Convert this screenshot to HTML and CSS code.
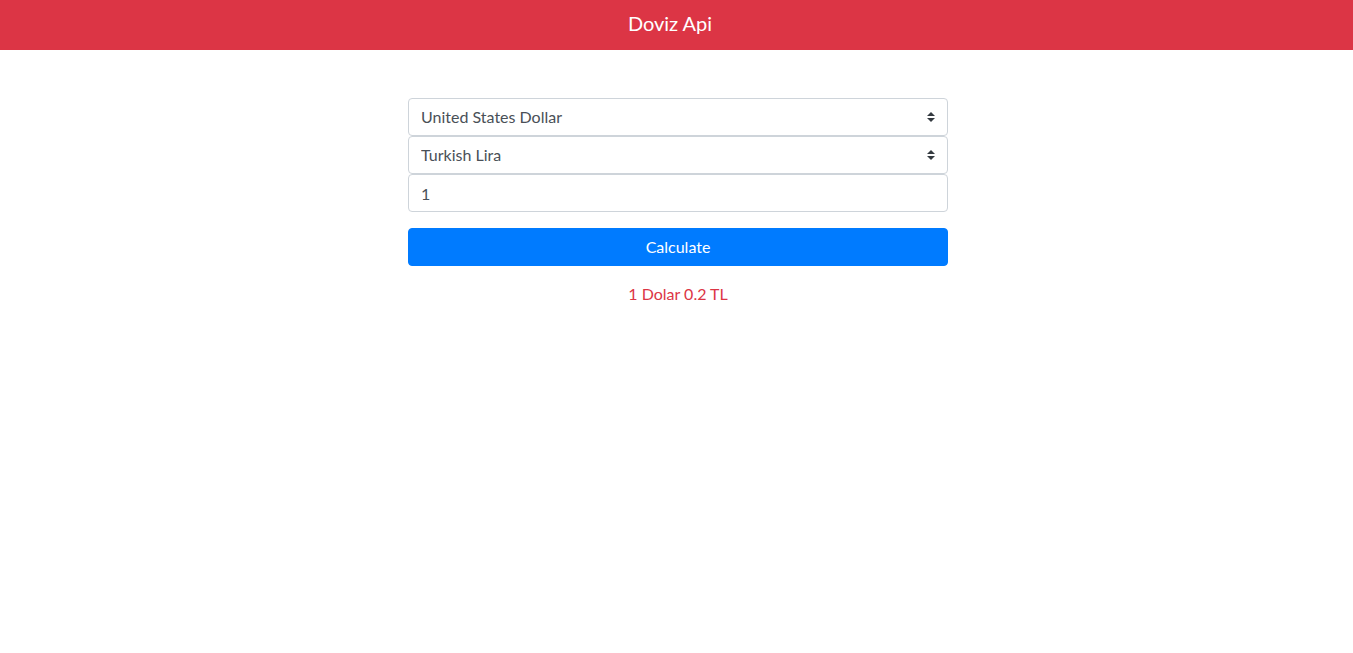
FILE: index.html
```html
<!DOCTYPE html>
<html lang="en">
<head>
<meta charset="utf-8">
<title>Doviz Api</title>
<link rel="stylesheet" href="styles.css">
</head>
<body>
<header class="navbar"><span class="brand">Doviz Api</span></header>
<main class="container">
  <form class="converter">
    <select class="custom-select">
      <option>United States Dollar</option>
    </select>
    <select class="custom-select">
      <option>Turkish Lira</option>
    </select>
    <input class="form-control" type="text" value="1">
    <button type="button" class="btn-primary">Calculate</button>
  </form>
  <p class="result">1 Dolar 0.2 TL</p>
</main>
</body>
</html>
```
FILE: styles.css
```css
* { box-sizing: border-box; }
body {
  margin: 0;
  font-family: "Segoe UI", Lato, "Open Sans", "Liberation Sans", sans-serif;
  font-size: 16px;
  line-height: 1.5;
  color: #212529;
  background: #fff;
}
.navbar {
  height: 50px;
  background: #dc3545;
  display: flex;
  align-items: center;
  justify-content: center;
  padding-right: 13px;
  padding-bottom: 5px;
}
.brand {
  color: #fff;
  font-size: 20px;
  line-height: 30px;
}
.container {
  width: 543px;
  margin: 48px auto 0;
  padding-left: 3px;
}
.converter {
  display: flex;
  flex-direction: column;
}
.custom-select,
.form-control {
  display: block;
  width: 100%;
  height: 38px;
  padding: 6px 12px;
  font: inherit;
  font-size: 16px;
  line-height: 1.5;
  color: #495057;
  background-color: #fff;
  border: 1px solid #ced4da;
  border-radius: 4px;
  outline: none;
}
.custom-select {
  -webkit-appearance: none;
  appearance: none;
  padding-right: 28px;
  background-image: url("data:image/svg+xml,%3csvg xmlns='http://www.w3.org/2000/svg' width='4' height='5' viewBox='0 0 4 5'%3e%3cpath fill='%23343a40' d='M2 0L0 2h4zm0 5L0 3h4z'/%3e%3c/svg%3e");
  background-repeat: no-repeat;
  background-position: right 12px center;
  background-size: 8px 10px;
}
.btn-primary {
  margin-top: 16px;
  height: 38px;
  width: 100%;
  border: 1px solid #007bff;
  background: #007bff;
  color: #fff;
  font: inherit;
  font-size: 16px;
  border-radius: 4px;
  padding: 6px 12px;
}
.result {
  margin: 16px 0 0;
  text-align: center;
  color: #dc3545;
}
```
